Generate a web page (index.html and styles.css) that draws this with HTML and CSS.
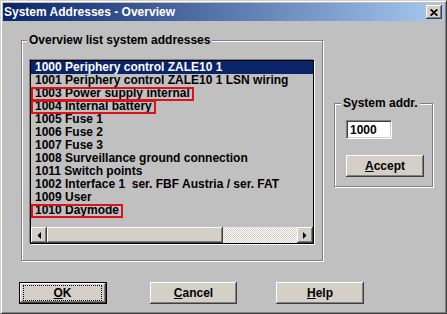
FILE: index.html
```html
<!DOCTYPE html>
<html>
<head>
<meta charset="utf-8">
<title>System Addresses - Overview</title>
<link rel="stylesheet" href="styles.css">
</head>
<body>
<div class="window">
  <div class="titlebar">
    <span class="title">System Addresses - Overview</span>
    <span class="close"><svg width="8" height="7" viewBox="0 0 8 7"><path d="M0.6 0.3 L7.4 6.7 M7.4 0.3 L0.6 6.7" stroke="#000" stroke-width="1.7" fill="none"/></svg></span>
  </div>
  <div class="content">
    <div class="groups">
      <div class="group group-list">
        <div class="group-title">Overview list system addresses</div>
        <div class="listbox">
          <ul class="items">
            <li class="item selected">1000 Periphery control ZALE10 1</li>
            <li class="item">1001 Periphery control ZALE10 1 LSN wiring</li>
            <li class="item marked"><span class="mark">1003 Power supply internal</span></li>
            <li class="item marked"><span class="mark">1004 Internal battery</span></li>
            <li class="item">1005 Fuse 1</li>
            <li class="item">1006 Fuse 2</li>
            <li class="item">1007 Fuse 3</li>
            <li class="item">1008 Surveillance ground connection</li>
            <li class="item">1011 Switch points</li>
            <li class="item">1002 Interface 1  ser. FBF Austria / ser. FAT</li>
            <li class="item">1009 User</li>
            <li class="item marked"><span class="mark">1010 Daymode</span></li>
          </ul>
          <div class="hscroll">
            <span class="sbtn"><svg width="4" height="7" viewBox="0 0 4 7"><path d="M4 0 V7 L0.5 3.5 Z" fill="#000"/></svg></span>
            <span class="track"><span class="thumb"></span></span>
            <span class="sbtn"><svg width="4" height="7" viewBox="0 0 4 7"><path d="M0 0 V7 L3.5 3.5 Z" fill="#000"/></svg></span>
          </div>
        </div>
      </div>
      <div class="group group-addr">
        <div class="group-title">System addr.</div>
        <div class="field">1000</div>
        <button class="btn accept"><u>A</u>ccept</button>
      </div>
    </div>
    <div class="actions">
      <button class="btn btn-default ok"><span class="focus"><u>O</u>K</span></button>
      <button class="btn cancel"><u>C</u>ancel</button>
      <button class="btn help"><u>H</u>elp</button>
    </div>
  </div>
</div>
</body>
</html>
```

FILE: styles.css
```css
* { box-sizing: border-box; }
html, body { margin: 0; padding: 0; }
body {
  width: 447px;
  height: 314px;
  overflow: hidden;
  background: #c0c0c0;
  font-family: "Liberation Sans", Arial, sans-serif;
  font-size: 12px;
  font-weight: bold;
  color: #000;
}
.window {
  width: 447px;
  height: 314px;
  background: #c0c0c0;
  border: 1px solid;
  border-color: #d4d0c8 #404040 #404040 #d4d0c8;
  box-shadow: inset 1px 1px #fff, inset -1px -1px #808080;
  padding: 2px;
  display: flex;
  flex-direction: column;
}
.titlebar {
  height: 18px;
  flex: none;
  background: linear-gradient(to right, #0a246a, #a6caf0);
  display: flex;
  align-items: center;
  justify-content: space-between;
  padding: 0 2px 0 1px;
  color: #fff;
}
.title { font-size: 12px; line-height: 18px; white-space: nowrap; }
.close {
  width: 16px;
  height: 14px;
  background: #d4d0c8;
  box-shadow: inset -1px -1px #404040, inset 1px 1px #fff, inset -2px -2px #808080;
  display: flex;
  align-items: center;
  justify-content: center;
}
.content { flex: 1; display: flex; flex-direction: column; }
.groups { display: flex; align-items: flex-start; margin-left: 18px; }
.group {
  border: 1px solid #808080;
  box-shadow: inset 1px 1px #fff, 1px 1px #fff;
}
.group-title {
  width: fit-content;
  margin-top: -8px;
  height: 14px;
  line-height: 14px;
  padding: 0 2px;
  background: #c0c0c0;
  white-space: nowrap;
}
.group-list { width: 302px; margin-top: 19px; padding-bottom: 16px; }
.group-list .group-title { margin-left: 5px; }
.listbox {
  margin: 13px 0 0 8px;
  width: 284px;
  height: 184px;
  border: 1px solid #000;
  box-shadow: -1px -1px 0 #808080, 1px 1px 0 #fff;
  background: #c0c0c0;
  display: flex;
  flex-direction: column;
}
.items { list-style: none; margin: 0; padding: 0; flex: 1; overflow: hidden; }
.item {
  height: 13px;
  line-height: 13px;
  padding-left: 4px;
  white-space: pre;
}
.item.selected { background: #0a246a; color: #fff; }
.item.marked { padding-left: 0; }
.mark {
  display: block;
  width: fit-content;
  height: 14px;
  line-height: 13px;
  padding: 0 4px;
  margin-bottom: -1px;
  outline: 2px solid #e01018;
  outline-offset: -2px;
}
.hscroll { height: 16px; flex: none; display: flex; }
.sbtn {
  width: 16px;
  height: 16px;
  flex: none;
  background: #d4d0c8;
  box-shadow: inset -1px -1px #404040, inset 1px 1px #fff, inset -2px -2px #808080;
  display: flex;
  align-items: center;
  justify-content: center;
}
.track {
  flex: 1;
  display: flex;
  background: repeating-conic-gradient(#ffffff 0 25%, #d4d0c8 0 50%) 0 0 / 2px 2px;
}
.thumb {
  width: 176px;
  height: 16px;
  background: #d4d0c8;
  box-shadow: inset -1px -1px #404040, inset 1px 1px #fff, inset -2px -2px #808080;
}
.group-addr { width: 99px; margin: 82px 0 0 11px; padding-bottom: 9px; }
.group-addr .group-title { margin-left: 6px; }
.field {
  margin: 10px 0 0 11px;
  width: 46px;
  height: 19px;
  background: #fff;
  border: 1px solid;
  border-color: #808080 #fff #fff #808080;
  box-shadow: inset 1px 1px #404040, inset -1px -1px #d4d0c8;
  padding: 2px 0 0 3px;
  line-height: 14px;
}
.btn {
  font-family: inherit;
  font-size: 12px;
  font-weight: bold;
  color: #000;
  height: 22px;
  padding: 0;
  border: none;
  background: #d4d0c8;
  box-shadow: inset -1px -1px #404040, inset 1px 1px #fff, inset -2px -2px #808080;
  display: flex;
  align-items: center;
  justify-content: center;
}
u { text-decoration: underline; text-underline-offset: 1px; }
.accept { width: 78px; margin: 16px 0 0 11px; }
.actions { display: flex; margin: 21px 0 0 16px; }
.btn-default {
  border: 1px solid #000;
  align-items: stretch;
}
.focus {
  flex: 1;
  margin: 2px 4px 2px 3px;
  border: 1px dotted #000;
  display: flex;
  align-items: center;
  justify-content: center;
}
.ok { width: 88px; }
.cancel { width: 87px; margin-left: 43px; }
.help { width: 88px; margin-left: 39px; }
```
